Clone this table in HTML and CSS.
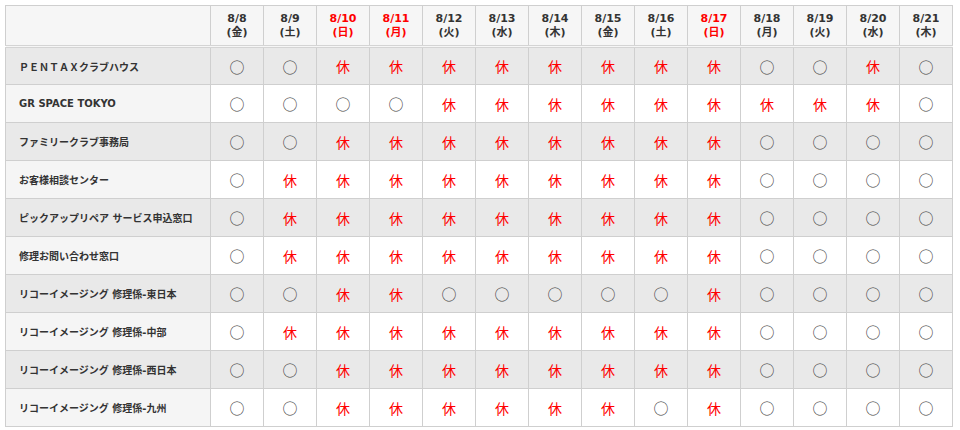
FILE: index.html
```html
<!DOCTYPE html>
<html lang="ja">
<head>
<meta charset="utf-8">
<title>営業日</title>
<link rel="stylesheet" href="styles.css">
</head>
<body>
<table class="cal">
<thead>
<tr>
<th class="name"></th>
<th>8/8<br>(金)</th><th>8/9<br>(土)</th><th class="hol">8/10<br>(日)</th><th class="hol">8/11<br>(月)</th><th>8/12<br>(火)</th><th>8/13<br>(水)</th><th>8/14<br>(木)</th><th>8/15<br>(金)</th><th>8/16<br>(土)</th><th class="hol">8/17<br>(日)</th><th>8/18<br>(月)</th><th>8/19<br>(火)</th><th>8/20<br>(水)</th><th>8/21<br>(木)</th>
</tr>
</thead>
<tbody>
<tr class="alt"><th class="name">ＰＥＮＴＡＸクラブハウス</th><td>○</td><td>○</td><td class="off">休</td><td class="off">休</td><td class="off">休</td><td class="off">休</td><td class="off">休</td><td class="off">休</td><td class="off">休</td><td class="off">休</td><td>○</td><td>○</td><td class="off">休</td><td>○</td></tr>
<tr><th class="name">GR SPACE TOKYO</th><td>○</td><td>○</td><td>○</td><td>○</td><td class="off">休</td><td class="off">休</td><td class="off">休</td><td class="off">休</td><td class="off">休</td><td class="off">休</td><td class="off">休</td><td class="off">休</td><td class="off">休</td><td>○</td></tr>
<tr class="alt"><th class="name">ファミリークラブ事務局</th><td>○</td><td>○</td><td class="off">休</td><td class="off">休</td><td class="off">休</td><td class="off">休</td><td class="off">休</td><td class="off">休</td><td class="off">休</td><td class="off">休</td><td>○</td><td>○</td><td>○</td><td>○</td></tr>
<tr><th class="name">お客様相談センター</th><td>○</td><td class="off">休</td><td class="off">休</td><td class="off">休</td><td class="off">休</td><td class="off">休</td><td class="off">休</td><td class="off">休</td><td class="off">休</td><td class="off">休</td><td>○</td><td>○</td><td>○</td><td>○</td></tr>
<tr class="alt"><th class="name">ピックアップリペア サービス申込窓口</th><td>○</td><td class="off">休</td><td class="off">休</td><td class="off">休</td><td class="off">休</td><td class="off">休</td><td class="off">休</td><td class="off">休</td><td class="off">休</td><td class="off">休</td><td>○</td><td>○</td><td>○</td><td>○</td></tr>
<tr><th class="name">修理お問い合わせ窓口</th><td>○</td><td class="off">休</td><td class="off">休</td><td class="off">休</td><td class="off">休</td><td class="off">休</td><td class="off">休</td><td class="off">休</td><td class="off">休</td><td class="off">休</td><td>○</td><td>○</td><td>○</td><td>○</td></tr>
<tr class="alt"><th class="name">リコーイメージング 修理係-東日本</th><td>○</td><td>○</td><td class="off">休</td><td class="off">休</td><td>○</td><td>○</td><td>○</td><td>○</td><td>○</td><td class="off">休</td><td>○</td><td>○</td><td>○</td><td>○</td></tr>
<tr><th class="name">リコーイメージング 修理係-中部</th><td>○</td><td class="off">休</td><td class="off">休</td><td class="off">休</td><td class="off">休</td><td class="off">休</td><td class="off">休</td><td class="off">休</td><td class="off">休</td><td class="off">休</td><td>○</td><td>○</td><td>○</td><td>○</td></tr>
<tr class="alt"><th class="name">リコーイメージング 修理係-西日本</th><td>○</td><td>○</td><td class="off">休</td><td class="off">休</td><td class="off">休</td><td class="off">休</td><td class="off">休</td><td class="off">休</td><td class="off">休</td><td class="off">休</td><td>○</td><td>○</td><td>○</td><td>○</td></tr>
<tr><th class="name">リコーイメージング 修理係-九州</th><td>○</td><td>○</td><td class="off">休</td><td class="off">休</td><td class="off">休</td><td class="off">休</td><td class="off">休</td><td class="off">休</td><td>○</td><td class="off">休</td><td>○</td><td>○</td><td>○</td><td>○</td></tr>
</tbody>
</table>
</body>
</html>
```

FILE: styles.css
```css
html, body {
  margin: 0;
  padding: 0;
  background: #fff;
}
body {
  padding: 5px;
  font-family: "DejaVu Sans", "Noto Sans CJK JP", sans-serif;
  color: #333;
}
.cal {
  width: 948px;
  border-collapse: collapse;
  table-layout: fixed;
}
.cal th, .cal td {
  border: 1px solid #cfcfcf;
  text-align: center;
  vertical-align: middle;
  padding: 0;
}
.cal thead th {
  height: 39px;
  background: #f6f6f6;
  font-size: 11px;
  font-weight: bold;
  line-height: 14px;
  color: #333;
  border-bottom: 3px double #d4d4d4;
}
.cal thead th.name {
  width: 204px;
}
.cal thead th.hol {
  color: #f00;
}
.cal tbody tr {
  height: 38px;
}
.cal tbody th.name {
  text-align: left;
  padding-left: 13px;
  font-size: 10px;
  font-weight: bold;
  color: #333;
  background: #f5f5f5;
  white-space: nowrap;
}
.cal tbody tr.alt th.name,
.cal tbody tr.alt td {
  background: #e9e9e9;
}
.cal td {
  font-family: "Noto Sans CJK JP", sans-serif;
  font-size: 15px;
  color: #444;
  background: #fff;
}
.cal td.off {
  color: #f00;
  font-size: 14px;
}
```
